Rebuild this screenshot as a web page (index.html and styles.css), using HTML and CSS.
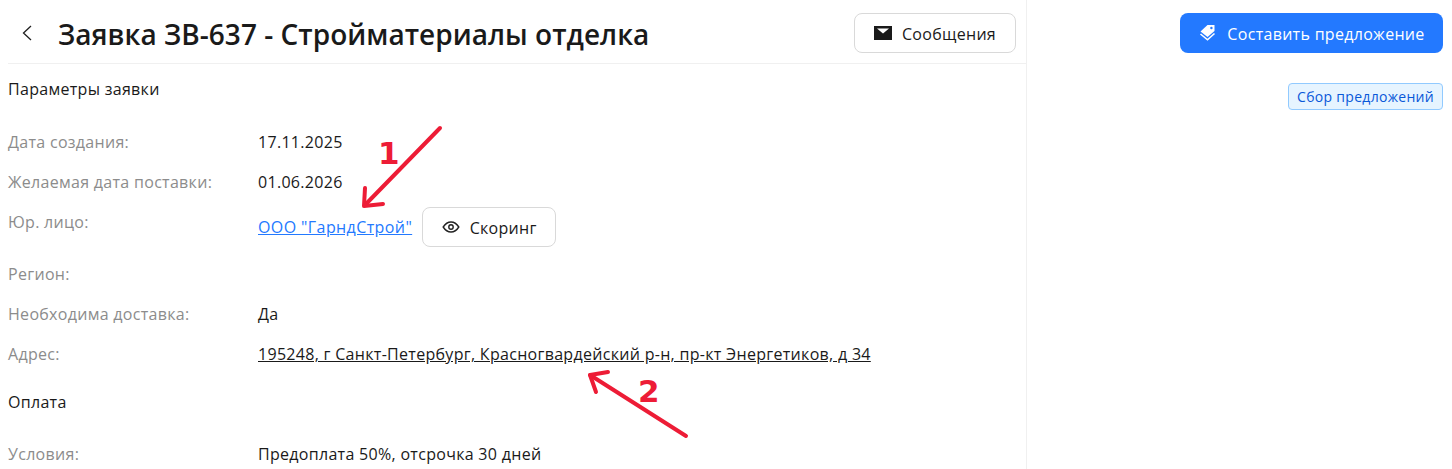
FILE: index.html
```html
<!DOCTYPE html>
<html lang="ru">
<head>
<meta charset="utf-8">
<title>Заявка ЗВ-637</title>
<link rel="stylesheet" href="styles.css">
</head>
<body>
<div class="page">
  <main class="main">
    <header class="head">
      <button class="back" aria-label="Назад">
        <svg width="12" height="16" viewBox="0 0 12 16"><path d="M10 1 L2.5 8 L10 15" fill="none" stroke="#1f1f1f" stroke-width="1.3"/></svg>
      </button>
      <h1 class="title">Заявка ЗВ-637 - Стройматериалы отделка</h1>
      <button class="btn btn-msg">
        <svg width="18" height="14" viewBox="0 0 18 14"><path d="M0 0h18v14H0z" fill="#1a1a1a"/><path d="M3 2.5 H15 L9 7.5 Z" fill="#fff"/></svg>
        <span class="lbl">Сообщения</span>
      </button>
    </header>
    <section class="section">
      <h2 class="sec-title">Параметры заявки</h2>
      <dl class="rows rows-first">
        <div class="row"><dt>Дата создания:</dt><dd>17.11.2025</dd></div>
        <div class="row"><dt>Желаемая дата поставки:</dt><dd>01.06.2026</dd></div>
        <div class="row row-tall"><dt>Юр. лицо:</dt><dd class="dd-flex"><a class="link" href="#">ООО "ГарндСтрой"</a>
          <button class="btn btn-score">
            <svg width="18" height="12" viewBox="0 0 18 12"><path d="M1.2 6 C3.5 2.4 6 1 9 1 S14.5 2.4 16.8 6 C14.5 9.6 12 11 9 11 S3.5 9.6 1.2 6Z" fill="none" stroke="#222" stroke-width="1.4"/><circle cx="9" cy="6" r="2.2" fill="none" stroke="#222" stroke-width="1.4"/></svg>
            <span class="lbl">Скоринг</span>
          </button></dd></div>
        <div class="row"><dt>Регион:</dt><dd></dd></div>
        <div class="row"><dt>Необходима доставка:</dt><dd>Да</dd></div>
        <div class="row"><dt>Адрес:</dt><dd><a class="addr" href="#">195248, г Санкт-Петербург, Красногвардейский р-н, пр-кт Энергетиков, д 34</a></dd></div>
      </dl>
      <h2 class="sec-title sec-pay">Оплата</h2>
      <dl class="rows">
        <div class="row"><dt>Условия:</dt><dd>Предоплата 50%, отсрочка 30 дней</dd></div>
      </dl>
    </section>
  </main>
  <aside class="side">
    <button class="btn-primary">
      <svg width="18" height="18" viewBox="0 0 18 18"><path d="M9.5 1 H16.5 V7 L9.5 13 L2.5 7.5 Z" fill="#fff"/><circle cx="13.4" cy="4" r="1.2" fill="#2379ff"/><path d="M2.5 10 L9.5 15.8 L16.5 9.5" fill="none" stroke="#fff" stroke-width="1.6"/></svg>
      <span class="lbl lbl-primary">Составить предложение</span>
    </button>
    <span class="tag">Сбор предложений</span>
  </aside>
</div>
<svg class="arrows" width="1452" height="469" viewBox="0 0 1452 469" aria-hidden="true">
  <g fill="none" stroke="#ed1c36" stroke-width="4" stroke-linecap="round" stroke-linejoin="round">
    <path d="M440 128 L365 205"/><path d="M365 188 L364 206 L383 204"/>
    <path d="M686 436 L590 375"/><path d="M608 372 L590 375 L596 392"/>
  </g>
</svg>
<span class="num num1">1</span>
<span class="num num2">2</span>
</body>
</html>
```
FILE: styles.css
```css
* { box-sizing: border-box; }
html, body { margin: 0; padding: 0; height: 100%; overflow: hidden; background: #fff; }
body { font-family: "Open Sans", "Noto Sans", sans-serif; font-size: 16px; letter-spacing: .3px; color: #1a1a1a; position: relative; }
button { font: inherit; letter-spacing: inherit; cursor: pointer; }
.page { display: flex; height: 469px; }
.main { width: 1027px; border-right: 1px solid #f0f0f0; padding-left: 8px; }
.head { display: flex; align-items: center; height: 64px; border-bottom: 1px solid #f0f0f0; padding: 2px 10px 0 0; }
.back { border: 0; background: none; padding: 0 0 0 13px; width: 50px; height: 40px; display: flex; align-items: center; }
.title { margin: 3px 0 0; flex: 1; font-size: 28px; letter-spacing: .03px; font-weight: 600; color: #1a1a1a; white-space: nowrap; }
.btn { display: inline-flex; align-items: center; justify-content: center; background: #fff; border: 1px solid #d9d9d9; border-radius: 8px; color: #1a1a1a; }
.btn-msg { width: 162px; height: 40px; gap: 10px; }
.lbl { padding-top: 2px; }
.lbl-primary { padding-left: 1px; }
.section { padding-top: 13px; }
.sec-title { margin: 0; font-size: 16px; font-weight: 400; line-height: 24px; color: #1a1a1a; }
.sec-pay { margin-top: 8px; }
.rows { margin: 0; padding-top: 28px; }
.rows-first { padding-top: 29px; }
.row { display: flex; line-height: 24px; height: 40px; }
.row-tall { height: 52px; }
.row dt { width: 250px; color: #8c8c8c; }
.row dd { margin: 0; }
.row .dd-flex { display: flex; align-items: center; gap: 10px; height: 40px; margin-top: -3px; }
.link { color: #2379ff; text-decoration: underline; letter-spacing: .4px; }
.addr { color: #1a1a1a; text-decoration: underline; }
.btn-score { width: 134px; height: 40px; gap: 10px; }
.side { flex: 1; display: flex; flex-direction: column; align-items: flex-end; padding: 13px 9px 0 0; }
.btn-primary { width: 263px; height: 40px; display: inline-flex; align-items: center; justify-content: center; gap: 10px; background: #2379ff; border: 0; border-radius: 8px; color: #fff; }
.tag { margin-top: 30px; height: 27px; padding: 0 8px; display: inline-flex; align-items: center; font-size: 14px; color: #0958d9; background: #e6f4ff; border: 1px solid #91caff; border-radius: 4px; }
.arrows { position: absolute; left: 0; top: 0; pointer-events: none; }
.num { position: absolute; font-family: "DejaVu Sans", sans-serif; font-weight: 700; font-size: 31px; line-height: 32px; letter-spacing: 0; color: #ed1c36; }
.num1 { left: 378px; top: 137px; }
.num2 { left: 638px; top: 375px; }
```
